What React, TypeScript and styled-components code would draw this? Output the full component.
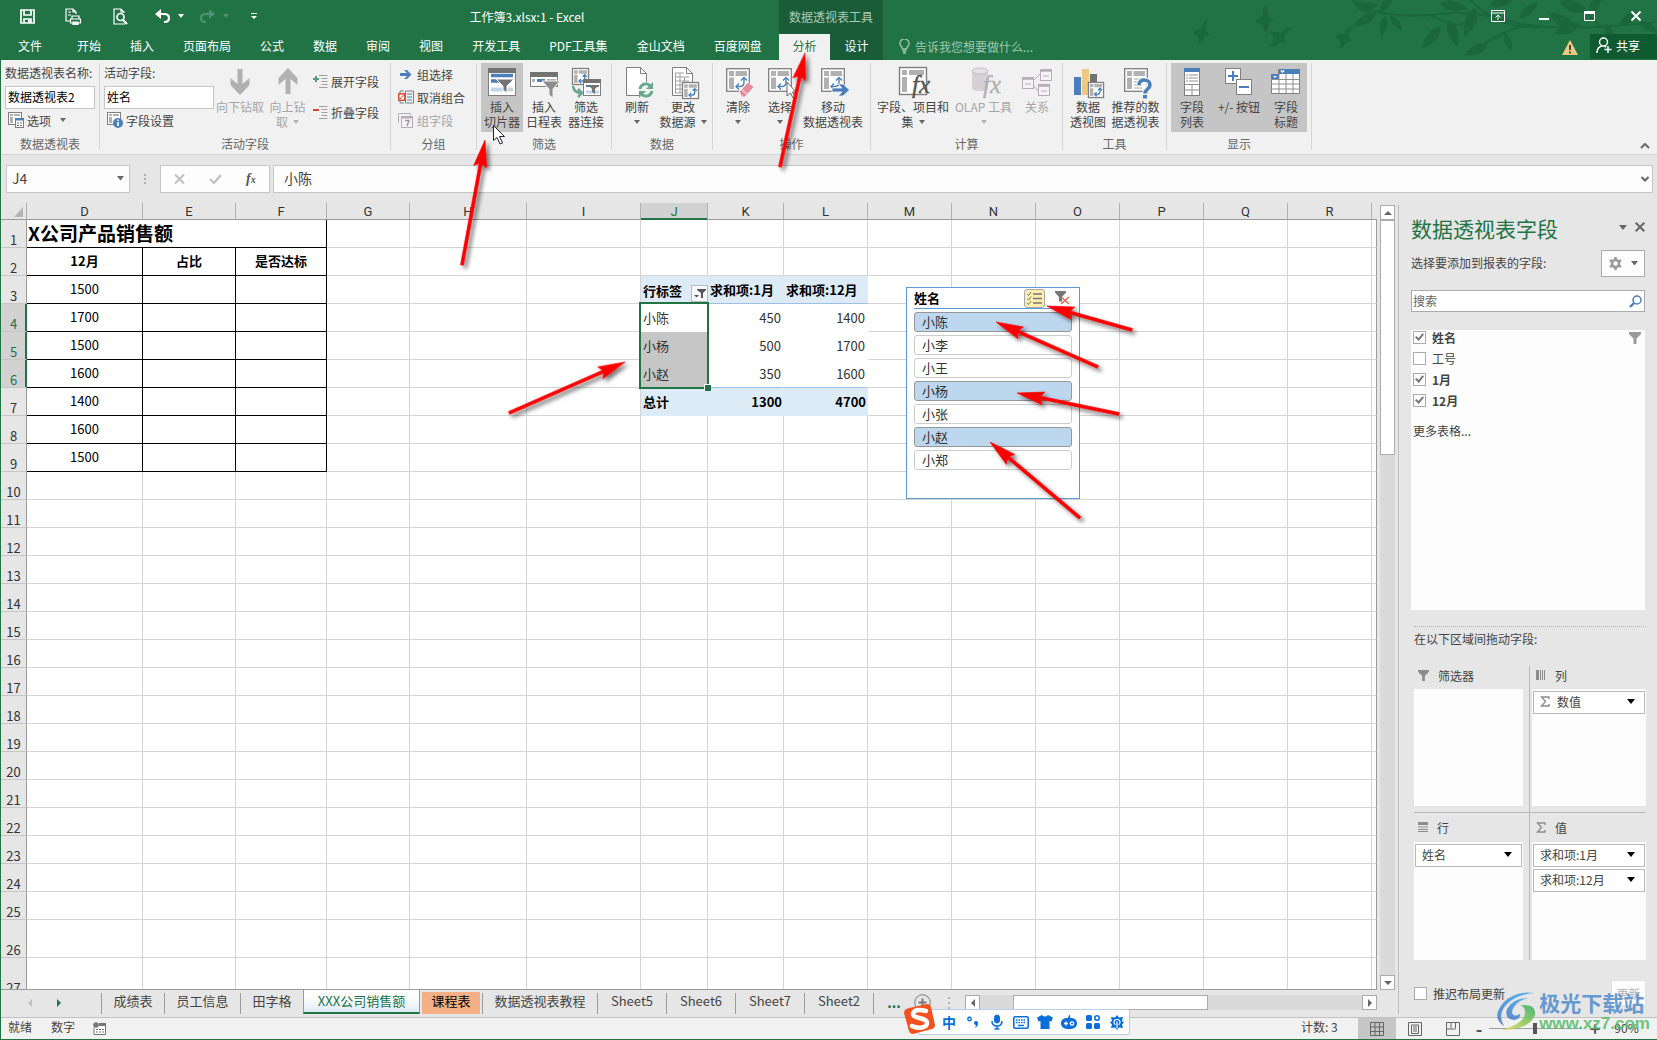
import React from 'react';
import styled, { createGlobalStyle, css } from 'styled-components';

const GREEN = '#217346';
const BLUE = '#4a7fbb';
const GREY = '#7f7f7f';

const Global = createGlobalStyle`
  *, *::before, *::after { box-sizing: border-box; }
  html, body { margin: 0; height: 100%; }
  body, button, input, table {
    font-family: "Noto Sans CJK SC", "Open Sans", sans-serif;
    font-size: 12px;
    line-height: 15px;
    color: #444;
  }
  button, input { margin: 0; padding: 0; border: 0; border-radius: 0; background: none; outline: none; }
  button { cursor: default; white-space: nowrap; }
  svg { display: block; flex: none; }
`;

const App_ = styled.div`
  position: relative;
  display: flex;
  flex-direction: column;
  height: 100vh;
  min-height: 700px;
  overflow: hidden;
  background: #e6e6e6;
  border-left: 1px solid ${GREEN};
`;

/* ---------- header ---------- */
const Header = styled.header`
  position: relative;
  flex: none;
  display: grid;
  grid-template-columns: 778px 104px 1fr auto;
  grid-template-rows: 34px 26px;
  background: ${GREEN};
  color: #fff;
`;
const Foliage = styled.svg`
  position: absolute;
  right: 0;
  top: 0;
`;
const TitleRow = styled.div`
  display: flex;
  align-items: center;
  padding-bottom: 2px;
`;
const QuickAccess = styled.div`
  width: 274px;
  height: 32px;
  padding-left: 18px;
  display: flex;
  align-items: center;
`;
const QuickButton = styled.button<{ $w: number; $gap?: number }>`
  width: ${p => p.$w}px;
  margin-right: ${p => p.$gap || 0}px;
  display: flex;
  justify-content: center;
  color: #fff;
`;
const FileTitle = styled.div`
  flex: 1;
  text-align: center;
`;
const ContextTitle = styled.div`
  background: #1b5c38;
  color: #a8cbb6;
  text-align: center;
  line-height: 34px;
`;
const WindowControls = styled.div`
  grid-column: 4;
  grid-row: 1;
  position: relative;
  display: flex;
  align-items: center;
  justify-content: flex-end;
  gap: 31px;
  padding-right: 14px;
  height: 32px;
`;
const WinButton = styled.button`
  width: 15px;
  display: flex;
  justify-content: center;
`;
const TabList = styled.nav`
  grid-row: 2;
  display: flex;
  gap: 29px;
  padding-left: 17px;
`;
const Tab = styled.button<{ $first?: boolean }>`
  color: #fff;
  padding-bottom: 4px;
  margin-right: ${p => (p.$first ? 6 : 0)}px;
`;
const ContextTabs = styled.div`
  grid-row: 2;
  display: flex;
  background: #1b5c38;
`;
const ContextTab = styled.button<{ $active?: boolean }>`
  width: ${p => (p.$active ? 51 : 53)}px;
  padding-bottom: 4px;
  background: ${p => (p.$active ? '#f1f1f1' : 'transparent')};
  color: ${p => (p.$active ? GREEN : '#fff')};
`;
const TellMe = styled.button`
  grid-row: 2;
  display: flex;
  align-items: center;
  gap: 5px;
  padding: 0 0 2px 16px;
  color: #9fcab1;
`;
const ShareArea = styled.div`
  grid-row: 2;
  position: relative;
  display: flex;
  align-items: flex-start;
  justify-content: flex-end;
  gap: 12px;
`;
const WarningIcon = styled.svg`
  margin-top: 6px;
`;
const ShareButton = styled.button`
  display: flex;
  align-items: center;
  gap: 4px;
  width: 67px;
  height: 25px;
  padding: 0 0 2px 6px;
  background: #0f5a30;
  color: #fff;
`;

/* ---------- ribbon ---------- */
const Ribbon = styled.section`
  flex: none;
  display: flex;
  height: 95px;
  padding: 3px 0 4px;
  background: #f1f1f1;
  border-bottom: 1px solid #d2d2d2;
`;
const Group = styled.div<{ $w: number }>`
  flex: none;
  width: ${p => p.$w}px;
  display: flex;
  flex-direction: column;
  border-right: 1px solid #d5d5d5;
`;
const GroupBody = styled.div`
  flex: 1;
  display: flex;
  padding-left: 4px;
`;
const GroupLabel = styled.div`
  height: 14px;
  text-align: center;
  color: #666;
`;
const Big = styled.button<{ $w: number; $on?: boolean; $disabled?: boolean }>`
  flex: none;
  width: ${p => p.$w}px;
  height: 69px;
  padding-top: 4px;
  display: flex;
  flex-direction: column;
  align-items: center;
  background: ${p => (p.$on ? '#c5c5c5' : 'transparent')};
  color: ${p => (p.$disabled ? '#a6a6a6' : '#444')};
`;
const BigText = styled.span`
  display: flex;
  align-items: center;
  justify-content: center;
  gap: 5px;
  height: 15px;
`;
const Stack = styled.div<{ $w: number }>`
  width: ${p => p.$w}px;
  display: flex;
  flex-direction: column;
  align-items: flex-start;
  padding-top: 2px;
`;
const FieldLabel = styled.label`
  height: 21px;
  line-height: 15px;
  white-space: nowrap;
`;
const TextBox = styled.input`
  width: 100%;
  height: 23px;
  padding: 0 2px 2px;
  background: #fff;
  border: 1px solid #c6c6c6;
  color: #000;
`;
const SmallButton = styled.button<{ $disabled?: boolean; $h?: number; $indent?: boolean }>`
  height: ${p => p.$h || 23}px;
  display: flex;
  align-items: center;
  gap: 3px;
  padding-left: ${p => (p.$indent ? 3 : 0)}px;
  color: ${p => (p.$disabled ? '#a6a6a6' : '#444')};
`;
const MenuMark = styled.span`
  padding-left: 6px;
`;
const SmallStack = styled.div<{ $top: number; $left: number }>`
  display: flex;
  flex-direction: column;
  padding-top: ${p => p.$top}px;
  padding-left: ${p => p.$left}px;
`;
const CollapseRibbon = styled.button`
  margin-left: auto;
  align-self: flex-end;
  padding: 0 7px 1px;
`;

/* ---------- formula bar ---------- */
const FormulaRow = styled.div`
  flex: none;
  display: flex;
  align-items: center;
  height: 48px;
  padding: 0 4px 1px 5px;
`;
const Box = styled.div<{ $w?: number }>`
  ${p => (p.$w ? css`flex: none; width: ${p.$w}px;` : css`flex: 1;`)}
  height: 28px;
  display: flex;
  align-items: center;
  background: #fdfdfd;
  border: 1px solid #c6c6c6;
`;
const BoxInput = styled.input<{ $pad: number }>`
  flex: 1;
  min-width: 0;
  height: 100%;
  padding: 0 0 2px ${p => p.$pad}px;
  font-size: 14px;
  line-height: 20px;
`;
const DotsGap = styled.div`
  width: 30px;
  display: flex;
  justify-content: center;
`;
const SmallGap = styled.div`
  width: 3px;
`;
const Spacer = styled.div`
  flex: 1;
`;
const BoxButton = styled.button<{ $w: number }>`
  width: ${p => p.$w}px;
  height: 100%;
  display: flex;
  align-items: center;
  justify-content: center;
`;

/* ---------- sheet ---------- */
const Main = styled.div`
  flex: 1;
  min-height: 0;
  display: flex;
`;
const Workbook = styled.div`
  flex: 1;
  min-width: 0;
  display: flex;
  flex-direction: column;
`;
const SheetRow = styled.div`
  flex: 1;
  min-height: 0;
  display: flex;
  gap: 3px;
  padding-right: 3px;
`;
const SheetView = styled.div`
  position: relative;
  flex: 1;
  min-width: 0;
  overflow: hidden;
  border-bottom: 1px solid #9b9b9b;
`;
const Grid = styled.table`
  width: 100%;
  table-layout: fixed;
  border-collapse: separate;
  border-spacing: 0;
  background: #fff;
  font-size: 13px;
  color: #000;
`;
const ColHead = styled.th<{ $on?: boolean; $last?: boolean }>`
  height: 17px;
  padding: 1px 0 0;
  font-family: Roboto, sans-serif;
  font-size: 13px;
  font-weight: 400;
  line-height: 15px;
  background: ${p => (p.$on ? '#d2d2d2' : '#e6e6e6')};
  color: ${p => (p.$on ? GREEN : '#333')};
  border-right: ${p => (p.$last ? 0 : 1)}px solid #b1b1b1;
  border-bottom: 1px solid #9b9b9b;
  ${p => p.$on && css`box-shadow: inset 0 -1px ${GREEN}; border-bottom-color: ${GREEN};`}
`;
const CornerHead = styled(ColHead)`
  svg { margin-left: 13px; }
`;
const RowHead = styled.th<{ $on?: boolean }>`
  padding: 0;
  font-size: 13px;
  font-weight: 400;
  line-height: 15px;
  vertical-align: bottom;
  text-align: center;
  background: ${p => (p.$on ? '#d2d2d2' : '#e6e6e6')};
  color: ${p => (p.$on ? GREEN : '#333')};
  border-right: 1px solid ${p => (p.$on ? GREEN : '#9b9b9b')};
  border-bottom: 1px solid #c6c6c6;
  ${p => p.$on && css`box-shadow: inset -1px 0 ${GREEN};`}
`;
type CellKind = 'plain' | 'table' | 'title' | 'phead' | 'pbody' | 'pend' | 'ptotal' | 'edge';
const Cell = styled.td<{ $kind: CellKind; $bold?: boolean; $align?: string; $shade?: boolean }>`
  padding: 0 2px;
  overflow: hidden;
  white-space: nowrap;
  line-height: 18px;
  vertical-align: middle;
  text-align: ${p => p.$align || 'left'};
  font-weight: ${p => (p.$bold ? 700 : 400)};
  border-right: 1px solid #d4d4d4;
  border-bottom: 1px solid #d4d4d4;
  ${p => (p.$kind === 'table' || p.$kind === 'title') && css`border-color: #000; padding-bottom: 1px;`}
  ${p => p.$kind === 'title' && css`font-size: 19px; line-height: 24px; padding: 0 0 2px 1px;`}
  ${p => p.$kind === 'phead' && css`background: #ddebf7; border-right: 0; border-color: #9bc2e6;`}
  ${p => p.$kind === 'ptotal' && css`background: #ddebf7; border-right: 0; border-color: #ddebf7;`}
  ${p => p.$kind === 'pbody' && css`border-color: #fff; color: #333;`}
  ${p => p.$kind === 'pend' && css`border-right-color: #fff; border-bottom-color: #9bc2e6; color: #333;`}
  ${p => p.$kind === 'edge' && css`border-right-color: #9b9b9b; padding: 0;`}
  ${p => p.$shade && css`background: #c6c6c6; border-bottom-color: #c6c6c6;`}
`;
const LabelWithFilter = styled.div`
  display: flex;
  justify-content: space-between;
  align-items: flex-end;
  height: 27px;
  padding-bottom: 1px;
  line-height: 22px;
  margin-right: -2px;
`;
const FilterButton = styled.button`
  width: 17px;
  height: 17px;
  display: grid;
  place-items: center;
  background: #f6f8fb;
  border: 1px solid #b5b9c2;
`;
const Selection = styled.div`
  position: absolute;
  left: 638px;
  top: 99px;
  width: 70px;
  height: 87px;
  border: 2px solid ${GREEN};
  &::after {
    content: '';
    position: absolute;
    right: -4px;
    bottom: -4px;
    width: 7px;
    height: 7px;
    background: ${GREEN};
    border: 1px solid #fff;
    border-width: 1px 0 0 1px;
  }
`;
const Slicer = styled.section`
  position: absolute;
  left: 905px;
  top: 84px;
  width: 174px;
  height: 212px;
  padding: 0 7px;
  background: #fff;
  border: 1px solid #5b9bd5;
`;
const SlicerHead = styled.div`
  display: flex;
  align-items: center;
  height: 21px;
  margin-bottom: 3px;
  border-bottom: 1px solid #5b9bd5;
  color: #000;
  font-size: 13px;
  font-weight: 700;
`;
const SlicerName = styled.span`
  padding-bottom: 2px;
`;
const MultiSelect = styled.button`
  margin: 0 10px 0 auto;
  width: 21px;
  height: 19px;
  display: grid;
  place-items: center;
  background: #fbeeb0;
  border: 1px solid #a8a8a8;
  border-radius: 3px;
`;
const SlicerList = styled.div`
  display: flex;
  flex-direction: column;
  gap: 3px;
`;
const SlicerItem = styled.button<{ $on?: boolean }>`
  height: 20px;
  padding-left: 7px;
  text-align: left;
  font-size: 13px;
  line-height: 18px;
  color: #333;
  border: 1px solid ${p => (p.$on ? '#979797' : '#ccc')};
  border-radius: 3px;
  background: ${p => (p.$on ? '#bdd7ee' : '#fff')};
`;

const VScroll = styled.div`
  flex: none;
  width: 15px;
  margin-top: 2px;
  display: flex;
  flex-direction: column;
  background: #dadada;
`;
const HScroll = styled.div`
  flex: 1;
  height: 15px;
  display: flex;
  background: #dadada;
`;
const ScrollButton = styled.button`
  flex: none;
  width: 15px;
  height: 15px;
  display: grid;
  place-items: center;
  background: #fdfdfd;
  border: 1px solid #ababab;
`;
const VThumb = styled.div`
  height: 235px;
  background: #fff;
  border: 1px solid #ababab;
`;
const HThumb = styled.div`
  width: 195px;
  margin-left: 33px;
  background: #fff;
  border: 1px solid #ababab;
`;
const SheetTabs = styled.div`
  flex: none;
  height: 27px;
  display: flex;
  padding-right: 21px;
`;
const SheetNav = styled.div`
  width: 100px;
  padding: 0 0 2px 25px;
  display: flex;
  align-items: center;
  gap: 21px;
`;
const SheetTab = styled.button<{ $w: number; $kind?: string; $first?: boolean }>`
  flex: none;
  width: ${p => p.$w}px;
  height: 21px;
  margin-top: 3px;
  font-size: 13px;
  line-height: 15px;
  padding-bottom: 6px;
  border-right: 1px solid #9b9b9b;
  ${p => p.$first && css`border-left: 1px solid #9b9b9b;`}
  ${p => p.$kind === 'active' && css`
    height: 25px;
    margin-top: -1px;
    padding: 1px 0 2px;
    color: ${GREEN};
    background: linear-gradient(#fff 30%, #dfebf6);
    border-left: 1px solid #9b9b9b;
    border-bottom: 2px solid ${GREEN};
  `}
  ${p => p.$kind === 'orange' && css`
    height: 22px;
    margin: 2px 2px 0;
    padding-bottom: 5px;
    color: #000;
    background: #f4b084;
    border: 0;
  `}
  ${p => p.$kind === 'before' && css`border-right: 0;`}
  ${p => p.$kind === 'after' && css`border-left: 1px solid #9b9b9b;`}
`;
const TabTail = styled.div`
  flex: 1;
  display: flex;
  align-items: center;
  padding-bottom: 2px;
`;
const MoreSheets = styled.button`
  width: 40px;
  font-size: 14px;
  font-weight: 700;
  color: ${GREEN};
`;
const AddSheet = styled.button`
  margin-right: 17px;
`;
const Dots = styled.div`
  width: 17px;
`;

/* ---------- field pane ---------- */
const Pane = styled.aside`
  flex: none;
  width: 259px;
  margin: 2px 0 3px;
  display: flex;
  flex-direction: column;
  border-left: 1px solid #c0c0c0;
`;
const PaneTop = styled.div`
  flex: 1;
  min-height: 0;
  display: flex;
  flex-direction: column;
  padding: 4px 12px 16px;
`;
const PaneTitle = styled.div`
  display: flex;
  align-items: center;
  gap: 8px;
  height: 40px;
  padding-bottom: 4px;
`;
const PaneHeading = styled.h2`
  flex: 1;
  margin: 0;
  padding-top: 2px;
  font-size: 21px;
  line-height: 30px;
  font-weight: 400;
  color: ${GREEN};
`;
const PaneTools = styled.div`
  display: flex;
  align-items: center;
  justify-content: space-between;
  height: 28px;
  margin-bottom: 13px;
`;
const PaneHint = styled.span`
  padding-bottom: 2px;
`;
const GearButton = styled.button`
  width: 44px;
  height: 27px;
  display: flex;
  align-items: center;
  justify-content: center;
  gap: 9px;
  background: #fdfdfd;
  border: 1px solid #ababab;
`;
const SearchBox = styled.div`
  display: flex;
  align-items: center;
  flex: none;
  height: 22px;
  margin-bottom: 18px;
  padding: 0 2px 0 1px;
  background: #fff;
  border: 1px solid #ababab;
`;
const SearchInput = styled.input`
  flex: 1;
  min-width: 0;
  padding-bottom: 2px;
  &::placeholder { color: #666; opacity: 1; }
`;
const FieldList = styled.div`
  flex: 1;
  min-height: 0;
  position: relative;
  padding: 0 2px;
  background: #fdfdfd;
`;
const CheckRow = styled.label<{ $bold?: boolean; $h: number }>`
  display: flex;
  align-items: center;
  gap: 6px;
  height: ${p => p.$h}px;
  font-weight: ${p => (p.$bold ? 700 : 400)};
`;
const Check = styled.input`
  appearance: none;
  flex: none;
  position: relative;
  width: 13px;
  height: 13px;
  background: #fff;
  border: 1px solid #ababab;
  &:checked::after {
    content: '';
    position: absolute;
    left: 3px;
    top: 0;
    width: 5px;
    height: 8px;
    border: solid #777;
    border-width: 0 2px 2px 0;
    transform: rotate(40deg);
  }
`;
const FieldFilter = styled.button`
  margin-left: auto;
  align-self: flex-start;
  padding: 2px 2px 0;
`;
const MoreTables = styled.a`
  display: block;
  margin-top: 9px;
  color: #444;
  text-decoration: none;
`;
const PaneBottom = styled.div`
  flex: none;
  padding: 0 11px 0 15px;
`;
const AreasCaption = styled.div`
  height: 40px;
  padding-top: 4px;
  border-top: 1px dotted #b5b5b5;
`;
const Areas = styled.div`
  display: grid;
  grid-template-columns: 1fr 1fr;
`;
const Area = styled.section<{ $left?: boolean; $top?: boolean }>`
  display: flex;
  flex-direction: column;
  padding: ${p => (p.$left ? '0 6px 0 0' : '0 0 0 2px')};
  ${p => p.$left && css`border-right: 1px solid #b9b9b9;`}
  ${p => p.$top && css`padding-bottom: 6px; border-bottom: 1px solid #b9b9b9;`}
`;
const AreaHead = styled.div<{ $h: number }>`
  height: ${p => p.$h}px;
  display: flex;
  align-items: center;
  gap: 9px;
  padding: 0 0 ${p => (p.$h > 25 ? 0 : 4)}px 4px;
`;
const AreaBody = styled.div<{ $h: number }>`
  height: ${p => p.$h}px;
  padding: 2px 1px;
  display: flex;
  flex-direction: column;
  gap: 2px;
  background: #fdfdfd;
`;
const AreaItem = styled.button`
  height: 23px;
  padding: 0 9px 2px 6px;
  display: flex;
  align-items: center;
  gap: 7px;
  background: #fff;
  border: 1px solid #b9b9b9;
  svg:last-child { margin-left: auto; }
`;
const PaneFooter = styled.div`
  display: flex;
  align-items: center;
  justify-content: space-between;
  height: 54px;
  padding-top: 12px;
`;
const UpdateButton = styled.button`
  width: 35px;
  height: 26px;
  background: #fdfdfd;
  border: 1px solid #e1e1e1;
  color: #b1b1b1;
`;

/* ---------- status bar ---------- */
const Status = styled.footer`
  flex: none;
  height: 23px;
  display: flex;
  align-items: center;
  padding-left: 7px;
  background: #f1f1f1;
  border-top: 1px solid #c0c0c0;
  border-bottom: 1px solid ${GREEN};
`;
const StatusText = styled.span<{ $w?: number }>`
  padding-bottom: 4px;
  width: ${p => (p.$w ? p.$w + 'px' : 'auto')};
`;
const StatusRight = styled.div`
  margin-left: auto;
  display: flex;
  align-items: center;
`;
const ViewButton = styled.button<{ $on?: boolean }>`
  width: 38px;
  height: 21px;
  display: grid;
  place-items: center;
  background: ${p => (p.$on ? '#c6c6c6' : 'transparent')};
`;
const ZoomButton = styled.button`
  width: 14px;
  font-size: 18px;
  font-weight: 700;
  color: #555;
`;
const ZoomSlider = styled.input`
  appearance: none;
  width: 93px;
  height: 11px;
  margin: 0 6px 0 3px;
  background: linear-gradient(#a0a0a0, #a0a0a0) center / 100% 1px no-repeat;
  &::-webkit-slider-thumb {
    appearance: none;
    width: 4px;
    height: 11px;
    background: #555;
  }
`;
const ZoomText = styled.button`
  width: 55px;
  padding: 0 6px 2px 0;
`;

/* ---------- floating layers ---------- */
const ImeBar = styled.div`
  position: absolute;
  left: 917px;
  bottom: 5px;
  width: 212px;
  height: 26px;
  padding: 0 2px 0 20px;
  display: flex;
  align-items: center;
  justify-content: space-between;
  background: #fff;
  border: 1px solid #b9cfe8;
  border-radius: 2px;
`;
const ImeLogo = styled.svg`
  position: absolute;
  left: -15px;
  bottom: -1px;
`;
const ImeButton = styled.button`
  width: 20px;
  display: flex;
  justify-content: center;
  font-size: 14px;
  line-height: 20px;
  font-weight: 700;
  color: #0a6fd8;
`;
const Overlay = styled.svg`
  position: absolute;
  left: -1px;
  top: 0;
  pointer-events: none;
`;
const Watermark = styled.div`
  position: absolute;
  right: 7px;
  bottom: 6px;
  display: flex;
  align-items: center;
  pointer-events: none;
  opacity: 0.85;
`;
const WatermarkName = styled.div`
  font-size: 21px;
  line-height: 24px;
  font-weight: 700;
  color: #4f8ccd;
`;
const WatermarkUrl = styled.div`
  font-family: "Liberation Sans", sans-serif;
  font-size: 17px;
  line-height: 20px;
  font-weight: 700;
  color: #55bd6c;
`;

/* ---------- icons ---------- */
const Caret = ({ c = '#666', s = 6 }: { c?: string; s?: number }) => (
  <svg width={s} height={s / 2 + 1} viewBox="0 0 8 4" preserveAspectRatio="none"><path d="M0 0h8L4 4z" fill={c} /></svg>
);
const Tri = ({ d, c = '#666' }: { d: string; c?: string }) => (
  <svg width="8" height="8" viewBox="0 0 8 8"><path d={d} fill={c} /></svg>
);
const Funnel = ({ c = '#9a9a9a', s = 12 }: { c?: string; s?: number }) => (
  <svg width={s} height={s} viewBox="0 0 12 12"><path d="M0 0h12v2L7.500 6.500V12h-3V6.500L0 2z" fill={c} /></svg>
);
const Pivot = ({ x = 4, y = 1, s = 24, lines = false }: { x?: number; y?: number; s?: number; lines?: boolean }) => (
  <g transform={`translate(${x} ${y}) scale(${s / 24})`}>
    <rect x="0.700" y="0.700" width="22.600" height="22.600" fill="#fff" stroke={GREY} strokeWidth={24 / s * 1.300} />
    <path d="M3 3h5v5H3zM9.500 3H21v5H9.500zM3 9.500h5V21H3z" fill="#b1b1b1" />
    {lines
      ? <path d="M10 11h10M10 14h10M10 17h8M10 20h8" stroke="#c5c5c5" strokeWidth="1.500" />
      : <g fill="none" stroke={BLUE} strokeWidth={24 / s * 1.400}>
        <path d="M18 10v4q0 4.500-4 4.500h-3" /><path d="M15 12.500l3-3 3 3M13 15.500l-3 3 3 3" />
      </g>}
  </g>
);
const Fx = ({ x, y, s, c }: { x: number; y: number; s: number; c: string }) => (
  <text x={x} y={y} fontFamily="Liberation Serif, serif" fontStyle="italic" fontSize={s} fill={c} stroke={c} strokeWidth=".4">fx</text>
);
const ICONS: Record<string, React.ReactNode> = {
  down: <path d="M13.500 2h5v15l7-6v7L16 28 6.500 18v-7l7 6z" fill="#b1b1b1" />,
  up: <path d="M13.500 27h5V12l7 6v-7L16 1 6.500 11v7l7-6z" fill="#b1b1b1" />,
  slicer: <>
    <rect x="2.500" y="1.500" width="27" height="27" fill="#fff" stroke={GREY} /><path d="M2 1h28v5H2z" fill="#737373" />
    <path d="M5 8.500h22M5 14h12" stroke={BLUE} strokeWidth="3.500" /><path d="M5 22.500h22" stroke="#c3d6ec" strokeWidth="4" />
    <path d="M10 12h18l-7 7v7l-4-3v-4z" fill="#737373" stroke="#fff" strokeWidth="1" />
  </>,
  timeline: <>
    <rect x="2.500" y="5.500" width="27" height="14" fill="#fff" stroke={GREY} /><path d="M2 5h28v5H2z" fill="#737373" />
    <path d="M4 13.500h3" stroke="#b1b1b1" strokeWidth="3" /><path d="M9 13.500h8" stroke={BLUE} strokeWidth="3" /><path d="M19 13.500h9" stroke="#b1b1b1" strokeWidth="3" />
    <path d="M14 14h18l-7 8v9l-4-3v-6z" fill="#8c8c8c" stroke="#f1f1f1" />
  </>,
  connect: <>
    <Pivot x={2} y={1} s={17} />
    <path d="M3 19q1 7 8 7M8 22l4 4-4 4" stroke="#6aa78f" strokeWidth="2.500" fill="none" />
    <rect x="13.500" y="12.500" width="17" height="16" fill="#fff" stroke={GREY} /><path d="M13 12h18v4H13z" fill="#737373" />
    <path d="M16 19h13" stroke={BLUE} strokeWidth="2" /><path d="M16 25h13" stroke="#c3d6ec" strokeWidth="3" /><path d="M18 18h11l-4 4v5l-3-2v-3z" fill="#737373" />
  </>,
  refresh: <>
    <path d="M5.500 0.500h14l6 6v22h-20z" fill="#fff" stroke={GREY} /><path d="M19.500 .500v6h6" fill="none" stroke={GREY} />
    <circle cx="25" cy="23" r="8" fill="#f1f1f1" />
    <g fill="none" stroke="#6aa78f" strokeWidth="2.800"><path d="M19 22a6 6 0 0 1 10.500-3M31 24a6 6 0 0 1-10.500 3" /></g>
    <path d="M32 15v7h-7zM18 31v-7h7z" fill="#6aa78f" />
  </>,
  source: <>
    <path d="M5.500 .500h14l6 6v22h-20z" fill="#fff" stroke={GREY} /><path d="M19.500 .500v6h6" fill="none" stroke={GREY} />
    <path d="M8 6h9M8 10h14M8 14h14M8 18h14M8 22h14M8 26h9M8.500 6v20M13 6v20M17.500 10v16" stroke="#a0a0a0" fill="none" />
    <Pivot x={15} y={15} s={17} />
  </>,
  clear: <><Pivot /><path d="M17 25l9-10 6 5-9 10h-3z" fill="#e78ba0" stroke="#f1f1f1" /><path d="M19.500 22.500l6 5" stroke="#fff" /></>,
  select: <><Pivot /><path d="M23 15v14l3.500-3 2.500 5 2-1-2.500-5h3.500z" fill="#fff" stroke="#666" /></>,
  move: <><Pivot /><path d="M15 21h10l-4-4h5l6.500 6-6.500 6h-5l4-4H15z" fill={BLUE} stroke="#f1f1f1" strokeWidth=".8" /></>,
  fields: <>
    <rect x="2.500" y=".500" width="27" height="27" fill="#fff" stroke={GREY} strokeWidth="1.400" />
    <path d="M5 3h5v5H5zM12 3h15v5H12zM5 10h5v15H5z" fill="#b1b1b1" /><Fx x={15} y={26} s={25} c="#555" />
  </>,
  olap: <>
    <path d="M4 4v17q0 3 8 3t8-3V4z" fill="#d4d0d4" /><ellipse cx="12" cy="4" rx="8" ry="3" fill="#e4e0e4" stroke="#c5c0c5" /><Fx x={15} y={26} s={25} c="#b1b1b1" />
  </>,
  relation: <g fill="#f7f2f7" stroke="#b5aeb5">
    <path d="M12 14l8-8M12 18l6 7" /><rect x="1.500" y="10.500" width="11" height="11" /><rect x="19.500" y="2.500" width="11" height="11" /><rect x="17.500" y="17.500" width="11" height="11" />
    <path d="M1 11.500h12M19 3.500h12M17 18.500h12" strokeWidth="2.500" /><path d="M4 17h6M22 9h6M20 24h6" />
  </g>,
  chart: <><path d="M2 10h7v18H2z" fill={BLUE} /><path d="M10 2h7v26h-7z" fill="#efc983" /><path d="M18 7h7v8h-7z" fill="#737373" /><Pivot x={16} y={15} s={16} /></>,
  recommend: <><Pivot lines /><path d="M19 18c0-7 11-6 11 0 0 4-5 4-5 8.500" fill="none" stroke="#f1f1f1" strokeWidth="6" /><path d="M19 18c0-7 11-6 11 0 0 4-5 4-5 8.500" fill="none" stroke={BLUE} strokeWidth="3.500" /><path d="M23 28h4v3.500h-4z" fill={BLUE} /></>,
  fieldlist: <>
    <rect x="8.500" y="1.500" width="15" height="27" fill="#fff" stroke={GREY} /><path d="M8 1h16v4H8z" fill={BLUE} />
    <path d="M10 8h2M13 8h9M10 11h2M13 11h9M10 14h2M13 14h9M8 17.500h16M8 23h16M16 17v11" stroke="#8f8f8f" fill="none" />
  </>,
  plusminus: <>
    <rect x="2.500" y="1.500" width="15" height="15" fill="#fff" stroke={GREY} /><path d="M5 9h10M10 4v10" stroke={BLUE} strokeWidth="2" />
    <rect x="13.500" y="12.500" width="15" height="15" fill="#fff" stroke={GREY} /><path d="M16 20h10" stroke={BLUE} strokeWidth="2" />
  </>,
  headers: <>
    <path d="M1.500 8h7V2.500h21v24h-28z" fill="#fff" stroke={GREY} /><path d="M9 2h21v5H9zM1 7h8v5.500H1z" fill={BLUE} />
    <path d="M1 12.500h29M1 17h29M1 22h29M9 7v19M16 7v19M23 7v19" stroke="#8f8f8f" /><path d="M10 3.500h5l-2.500 2.500zM3 9h4L5 11z" fill="#fff" />
  </>,
};
const BigIcon = ({ n }: { n: string }) => <svg width="32" height="32" viewBox="0 0 32 32" overflow="visible">{ICONS[n]}</svg>;

const OptionIcon = ({ info }: { info?: boolean }) => (
  <svg width="16" height="16" viewBox="0 0 16 16">
    <rect x=".5" y=".5" width="13" height="12" fill="#fff" stroke={GREY} /><path d="M2 2h3v2H2zM6 2h6v2H6zM2 5h3v6H2z" fill="#b1b1b1" />
    {info
      ? <><circle cx="11" cy="11" r="5" fill={BLUE} /><path d="M11 7.500v1.500M11 10v4" stroke="#fff" strokeWidth="1.600" /></>
      : <><rect x="7.500" y="6.500" width="8" height="9" fill="#fff" stroke={GREY} /><path d="M7 6h9v2.500H7z" fill={BLUE} /><path d="M9 11h2M12 11h2M9 13.500h2M12 13.500h2" stroke="#777" /></>}
  </svg>
);
const ExpandIcon = ({ minus }: { minus?: boolean }) => (
  <svg width="15" height="14" viewBox="0 0 15 14">
    <path d={minus ? 'M0 4h6' : 'M0 4h6M3 1v6'} stroke={minus ? '#d24726' : '#559c81'} strokeWidth="2" />
    <path d="M6 .500h8.500M8.500 3.500h6M8.500 6.500h6M8.500 9.500h6M6 12.500h8.500" stroke="#a0a0a0" />
  </svg>
);
const GroupIcon = ({ k }: { k: number }) => (
  <svg width="16" height="15" viewBox="0 0 16 15">
    {k === 0 && <path d="M2 6h7L6 3h3l4.500 4.500L9 12H6l3-3H2z" fill={BLUE} />}
    {k === 1 && <><path d="M6 1H2v2M6 13H2v-2M7.500 1h8v12h-8z" fill="none" stroke={GREY} /><rect x=".8" y="3.800" width="6" height="6.500" fill="#fff" stroke="#d24726" strokeWidth="1.400" /><path d="M2 9l3.500-4" stroke="#d24726" /><path d="M9 4h5M9 7h5M9 10h5" stroke={BLUE} /></>}
    {k === 2 && <><path d="M.500 10V.500h12v2" fill="none" stroke="#b5aeb5" /><rect x="3.500" y="3.500" width="11" height="11" fill="#f7f2f7" stroke="#b5aeb5" /><path d="M3 4.500h12" stroke="#b5aeb5" strokeWidth="2" /><path d="M7 7.500h4L9 13" fill="none" stroke="#999" strokeWidth="1.400" /></>}
  </svg>
);
const Sigma = () => <svg width="10" height="11" viewBox="0 0 10 11"><path d="M9 3V1H1.500l4 4.500-4 4.500H9V8" fill="none" stroke="#8c8c8c" strokeWidth="1.400" /></svg>;
const ColsIcon = () => <svg width="10" height="11" viewBox="0 0 10 11"><path d="M0 0h3v10H0z" fill="#8c8c8c" /><path d="M4.500 0v10M6.500 0v10M8.500 0v10" stroke="#8c8c8c" /></svg>;
const RowsIcon = () => <svg width="10" height="11" viewBox="0 0 10 11"><path d="M0 0h10v3H0z" fill="#8c8c8c" /><path d="M0 5h10M0 7.500h10M0 9.500h10" stroke="#8c8c8c" /></svg>;

type BigProps = { w: number; icon: string; l1: string; l2?: string; menu?: boolean; on?: boolean; off?: boolean };
const BigBtn = ({ w, icon, l1, l2, menu, on, off }: BigProps) => (
  <Big $w={w} $on={on} $disabled={off}>
    <BigIcon n={icon} />
    <BigText>{l1}</BigText>
    <BigText>{l2}{menu && <Caret c={off ? '#b5b5b5' : '#666'} />}</BigText>
  </Big>
);

const Leaf = ({ x, y, r, s = 1 }: { x: number; y: number; r: number; s?: number }) => (
  <path transform={`translate(${x} ${y}) rotate(${r}) scale(${s})`} d="M0 0Q8-9 24 0Q8 8 0 0" />
);
const Bird = ({ x, y, r, s = 1 }: { x: number; y: number; r: number; s?: number }) => (
  <path transform={`translate(${x} ${y}) rotate(${r}) scale(${s})`} d="M-8 4Q-4-1 0-1Q0-9 6-11Q4-4 5 1L9 4L4 6Q4 12-1 14Q-1 9-3 6Z" />
);
const HeaderArt = () => (
  <Foliage width="480" height="60" viewBox="1177 0 480 60" fill="#1c663d">
    <Bird x={1201} y={30} r={5} />
    <Bird x={1263} y={17} r={-10} s={1.100} />
    <Bird x={1280} y={34} r={35} s={1.100} />
    <Bird x={1344} y={35} r={15} />
    <g fill="none" stroke="#1c663d" strokeWidth="2">
      <path d="M1360 6Q1390 20 1440 14Q1480 10 1520 24Q1570 32 1657 22" />
      <path d="M1470 0Q1500 30 1540 27M1520 26Q1500 34 1480 46M1600 27Q1590 12 1570 4M1430 15Q1460 30 1465 22" />
    </g>
    <Leaf x={1372} y={12} r={-150} /><Leaf x={1376} y={13} r={150} s={1.100} /><Leaf x={1380} y={12} r={-50} s={0.900} />
    <Leaf x={1385} y={16} r={100} s={0.900} /><Leaf x={1390} y={16} r={50} s={0.800} /><Leaf x={1360} y={8} r={-10} s={0.800} />
    <Leaf x={1440} y={27} r={130} s={1.200} /><Leaf x={1448} y={20} r={70} s={1.200} /><Leaf x={1475} y={8} r={110} s={1.300} />
    <Leaf x={1440} y={4} r={10} s={1.200} /><Leaf x={1490} y={6} r={-20} s={1.200} /><Leaf x={1488} y={44} r={155} s={1.100} />
    <Leaf x={1505} y={34} r={70} s={0.800} /><Leaf x={1520} y={18} r={-40} /><Leaf x={1575} y={28} r={-150} s={1.300} />
    <Leaf x={1590} y={14} r={-60} /><Leaf x={1605} y={25} r={60} s={0.800} /><Leaf x={1620} y={24} r={-30} /><Leaf x={1580} y={24} r={160} s={1.200} />
    <Leaf x={1640} y={22} r={30} s={0.900} /><Leaf x={1560} y={2} r={20} s={1.300} />
  </Foliage>
);

/* tip and tail of each annotation arrow */
const ARROWS = [
  [485, 140, 462, 265], [805, 53, 780, 167], [625, 362, 509, 413], [1047, 306, 1132, 330],
  [996, 322, 1098, 367], [1017, 393, 1119, 414], [990, 442, 1080, 518],
];
const Arrow = ({ p }: { p: number[] }) => {
  const [x, y, tx, ty] = p;
  const len = Math.hypot(tx - x, ty - y);
  const a = (Math.atan2(ty - y, tx - x) * 180) / Math.PI;
  return (
    <g transform={`translate(${x} ${y}) rotate(${a})`}>
      <path d={`M0 0L27-6.500L24-1.500H${len}V1.500H24L27 6.500Z`} fill="#fb0506" stroke="#fb0506" strokeWidth=".6" strokeLinejoin="round" />
    </g>
  );
};

/* ---------- sheet data ---------- */
const COLS: [string, number][] = [
  ['D', 116], ['E', 93], ['F', 91], ['G', 83], ['H', 117], ['I', 114], ['J', 67], ['K', 76], ['L', 84],
  ['M', 84], ['N', 84], ['O', 84], ['P', 84], ['Q', 84], ['R', 84],
];
const D_VALUES = ['', '', '12月', '1500', '1700', '1500', '1600', '1400', '1600', '1500'];
const PIVOT: Record<number, string[]> = {
  3: ['行标签', '求和项:1月', '求和项:12月'],
  4: ['小陈', '450', '1400'], 5: ['小杨', '500', '1700'], 6: ['小赵', '350', '1600'], 7: ['总计', '1300', '4700'],
};

const renderCell = (row: number, col: string) => {
  if (row === 1) {
    if (col === 'D') return <Cell key={col} $kind="title" $bold colSpan={3}>X公司产品销售额</Cell>;
    if (col === 'E' || col === 'F') return null;
  }
  if (row <= 9 && 'DEF'.includes(col)) {
    const text = col === 'D' ? D_VALUES[row] : row === 2 ? (col === 'E' ? '占比' : '是否达标') : '';
    return <Cell key={col} $kind="table" $align="center" $bold={row === 2}>{text}</Cell>;
  }
  if (PIVOT[row] && 'JKL'.includes(col)) {
    const i = 'JKL'.indexOf(col);
    const text = PIVOT[row][i];
    if (row === 3) {
      return (
        <Cell key={col} $kind="phead" $bold>
          {i === 0 ? <LabelWithFilter>{text}<FilterButton aria-label="筛选"><svg width="12" height="11" viewBox="0 0 12 11"><path d="M3 1h9v1L9 5v5H7V5L3 2z" fill="#555" /><path d="M0 7h5L2.500 9.500z" fill="#555" /></svg></FilterButton></LabelWithFilter> : text}
        </Cell>
      );
    }
    return (
      <Cell key={col} $kind={row === 7 ? 'ptotal' : row === 6 ? 'pend' : 'pbody'} $bold={row === 7}
        $align={i ? 'right' : 'left'} $shade={i === 0 && (row === 5 || row === 6)}>{text}</Cell>
    );
  }
  return <Cell key={col} $kind="plain" />;
};

const TABS = ['文件', '开始', '插入', '页面布局', '公式', '数据', '审阅', '视图', '开发工具', 'PDF工具集', '金山文档', '百度网盘'];

export default function App() {
  return (
    <App_>
      <Global />
      <Header>
        <HeaderArt />
        <TitleRow>
          <QuickAccess>
            <QuickButton $w={16} $gap={29} aria-label="保存"><svg width="15" height="15" viewBox="0 0 15 15"><path d="M1 1h13v13H1zM4 1v5h7V1M4 14v-4h7v4" fill="none" stroke="#fff" strokeWidth="1.700" /><path d="M8 11h2v3H8z" fill="#fff" /></svg></QuickButton>
            <QuickButton $w={18} $gap={29} aria-label="打印"><svg width="17" height="17" viewBox="0 0 17 17" fill="none" stroke="#fff" strokeWidth="1.200"><path d="M5 13H1V1h7l3 3v2M8 1v3h3M3 4h3M3 7h3" /><path d="M7 8h7v3H7zM5.500 11h10v4h-10z" /><path d="M8 14h5v2.500H8z" fill="#fff" /></svg></QuickButton>
            <QuickButton $w={18} $gap={25} aria-label="预览"><svg width="17" height="17" viewBox="0 0 17 17" fill="none" stroke="#fff" strokeWidth="1.200"><path d="M12 5V4L9 1H2v15h11M9 1v3h3" /><circle cx="8.500" cy="9" r="3.500" strokeWidth="1.700" /><path d="M11 12l4 4" strokeWidth="2.200" /></svg></QuickButton>
            <QuickButton $w={18} $gap={6} aria-label="撤消"><svg width="16" height="14" viewBox="0 0 16 14"><path d="M2 5h7q5 0 5 4t-5 4" fill="none" stroke="#fff" strokeWidth="2.200" /><path d="M0 5l6-5v10z" fill="#fff" /></svg></QuickButton>
            <QuickButton $w={6} $gap={15} aria-label="撤消列表"><Caret c="#fff" /></QuickButton>
            <QuickButton $w={16} $gap={8} aria-label="恢复"><svg width="16" height="14" viewBox="0 0 16 14"><path d="M14 5H7Q2 5 2 9t5 4" fill="none" stroke="#4f9170" strokeWidth="2.200" /><path d="M16 5l-6-5v10z" fill="#4f9170" /></svg></QuickButton>
            <QuickButton $w={6} $gap={21} aria-label="恢复列表"><Caret c="#4f9170" /></QuickButton>
            <QuickButton $w={8} aria-label="自定义"><svg width="6" height="7" viewBox="0 0 6 7"><path d="M0 .500h6" stroke="#fff" /><path d="M0 3h6L3 6z" fill="#fff" /></svg></QuickButton>
          </QuickAccess>
          <FileTitle>工作簿3.xlsx:1 - Excel</FileTitle>
        </TitleRow>
        <ContextTitle>数据透视表工具</ContextTitle>
        <WindowControls>
          <WinButton aria-label="功能区显示选项"><svg width="14" height="12" viewBox="0 0 14 12" fill="none" stroke="#fff"><path d="M.500.500h13v11H.500zM.500 3h13M7 10V5M4.500 7.500L7 5l2.500 2.500" /></svg></WinButton>
          <WinButton aria-label="最小化"><svg width="10" height="10"><path d="M0 7h10v2H0z" fill="#fff" /></svg></WinButton>
          <WinButton aria-label="最大化"><svg width="11" height="10" viewBox="0 0 11 10"><path d="M.500 1.500h10v8H.500z" fill="none" stroke="#fff" /><path d="M0 0h11v3H0z" fill="#fff" /></svg></WinButton>
          <WinButton aria-label="关闭"><svg width="10" height="10" viewBox="0 0 10 10"><path d="M.500.500l9 9M9.500.500l-9 9" stroke="#fff" strokeWidth="2" /></svg></WinButton>
        </WindowControls>
        <TabList>{TABS.map((t, i) => <Tab key={t} $first={i === 0}>{t}</Tab>)}</TabList>
        <ContextTabs><ContextTab $active>分析</ContextTab><ContextTab>设计</ContextTab></ContextTabs>
        <TellMe><svg width="11" height="15" viewBox="0 0 11 15" fill="none" stroke="#9fcab1" strokeWidth="1.300"><path d="M3.500 10Q3.500 8.500 2 7A4.400 4.400 0 1 1 9 7Q7.500 8.500 7.500 10zM3.500 12h4M4 14h3" /></svg>告诉我您想要做什么...</TellMe>
        <ShareArea>
          <WarningIcon width="16" height="15" viewBox="0 0 16 15"><path d="M8 0l8 15H0z" fill="#efc983" /><path d="M8 5v5M8 11.500v2" stroke="#444" strokeWidth="2" /></WarningIcon>
          <ShareButton><svg width="16" height="17" viewBox="0 0 16 17" fill="none" stroke="#fff" strokeWidth="1.500"><circle cx="7.500" cy="5" r="4" /><path d="M1 16q0-6 5-7M8 9l2 1M12 9v7M8.500 12.500h7" /></svg>共享</ShareButton>
        </ShareArea>
      </Header>

      <Ribbon>
        <Group $w={99}>
          <GroupBody>
            <Stack $w={90}>
              <FieldLabel htmlFor="pname">数据透视表名称:</FieldLabel>
              <TextBox id="pname" defaultValue="数据透视表2" />
              <SmallButton $h={22} $indent><OptionIcon />选项<MenuMark><Caret /></MenuMark></SmallButton>
            </Stack>
          </GroupBody>
          <GroupLabel>数据透视表</GroupLabel>
        </Group>
        <Group $w={291}>
          <GroupBody>
            <Stack $w={110}>
              <FieldLabel htmlFor="afield">活动字段:</FieldLabel>
              <TextBox id="afield" defaultValue="姓名" />
              <SmallButton $h={22} $indent><OptionIcon info />字段设置</SmallButton>
            </Stack>
            <BigBtn w={52} icon="down" l1="向下钻取" off />
            <BigBtn w={43} icon="up" l1="向上钻" l2="取" menu off />
            <SmallStack $top={3} $left={4}>
              <SmallButton $h={31}><ExpandIcon />展开字段</SmallButton>
              <SmallButton $h={31}><ExpandIcon minus />折叠字段</SmallButton>
            </SmallStack>
          </GroupBody>
          <GroupLabel>活动字段</GroupLabel>
        </Group>
        <Group $w={86}>
          <GroupBody>
            <SmallStack $top={0} $left={3}>
              <SmallButton><GroupIcon k={0} />组选择</SmallButton>
              <SmallButton><GroupIcon k={1} />取消组合</SmallButton>
              <SmallButton $disabled><GroupIcon k={2} />组字段</SmallButton>
            </SmallStack>
          </GroupBody>
          <GroupLabel>分组</GroupLabel>
        </Group>
        <Group $w={135}>
          <GroupBody>
            <BigBtn w={42} icon="slicer" l1="插入" l2="切片器" on />
            <BigBtn w={42} icon="timeline" l1="插入" l2="日程表" />
            <BigBtn w={42} icon="connect" l1="筛选" l2="器连接" />
          </GroupBody>
          <GroupLabel>筛选</GroupLabel>
        </Group>
        <Group $w={101}>
          <GroupBody>
            <BigBtn w={42} icon="refresh" l1="刷新" menu />
            <BigBtn w={50} icon="source" l1="更改" l2="数据源" menu />
          </GroupBody>
          <GroupLabel>数据</GroupLabel>
        </Group>
        <Group $w={158}>
          <GroupBody>
            <BigBtn w={42} icon="clear" l1="清除" menu />
            <BigBtn w={42} icon="select" l1="选择" menu />
            <BigBtn w={64} icon="move" l1="移动" l2="数据透视表" />
          </GroupBody>
          <GroupLabel>操作</GroupLabel>
        </Group>
        <Group $w={192}>
          <GroupBody>
            <BigBtn w={76} icon="fields" l1="字段、项目和" l2="集" menu />
            <BigBtn w={65} icon="olap" l1="OLAP 工具" menu off />
            <BigBtn w={42} icon="relation" l1="关系" off />
          </GroupBody>
          <GroupLabel>计算</GroupLabel>
        </Group>
        <Group $w={104}>
          <GroupBody>
            <BigBtn w={42} icon="chart" l1="数据" l2="透视图" />
            <BigBtn w={53} icon="recommend" l1="推荐的数" l2="据透视表" />
          </GroupBody>
          <GroupLabel>工具</GroupLabel>
        </Group>
        <Group $w={145}>
          <GroupBody>
            <BigBtn w={42} icon="fieldlist" l1="字段" l2="列表" on />
            <BigBtn w={52} icon="plusminus" l1="+/- 按钮" on />
            <BigBtn w={42} icon="headers" l1="字段" l2="标题" on />
          </GroupBody>
          <GroupLabel>显示</GroupLabel>
        </Group>
        <CollapseRibbon aria-label="折叠功能区"><svg width="10" height="6" viewBox="0 0 10 6"><path d="M1 5l4-4 4 4" fill="none" stroke="#666" strokeWidth="2" /></svg></CollapseRibbon>
      </Ribbon>

      <FormulaRow>
        <Box $w={124}>
          <BoxInput $pad={5} aria-label="名称框" defaultValue="J4" />
          <BoxButton $w={18} aria-label="名称列表"><Caret s={7} /></BoxButton>
        </Box>
        <DotsGap><svg width="2" height="10"><path d="M0 0h2v2H0zM0 4h2v2H0zM0 8h2v2H0z" fill="#b1b1b1" /></svg></DotsGap>
        <Box $w={110}>
          <BoxButton $w={36} aria-label="取消"><svg width="11" height="10" viewBox="0 0 11 10"><path d="M1 .500l9 9M10 .500l-9 9" stroke="#c0c0c0" strokeWidth="2" /></svg></BoxButton>
          <BoxButton $w={36} aria-label="输入"><svg width="13" height="10" viewBox="0 0 13 10"><path d="M1 5l4 4 7-8" fill="none" stroke="#c0c0c0" strokeWidth="2.200" /></svg></BoxButton>
          <BoxButton $w={36} aria-label="插入函数"><svg width="14" height="16" viewBox="0 0 14 16"><text x="2" y="12" fontFamily="Liberation Serif, serif" fontStyle="italic" fontWeight="700" fontSize="14" fill="#555">f<tspan fontSize="10">x</tspan></text></svg></BoxButton>
        </Box>
        <SmallGap />
        <Box>
          <BoxInput $pad={10} aria-label="编辑栏" defaultValue="小陈" />
          <BoxButton $w={14} aria-label="展开编辑栏"><svg width="8" height="6" viewBox="0 0 8 6"><path d="M.500 1L4 4.500 7.500 1" fill="none" stroke="#666" strokeWidth="2" /></svg></BoxButton>
        </Box>
      </FormulaRow>

      <Main>
        <Workbook>
          <SheetRow>
            <SheetView>
              <Grid>
                <colgroup>
                  <col width={26} />
                  {COLS.map(([n, w]) => <col key={n} width={w} />)}
                  <col />
                </colgroup>
                <thead>
                  <tr>
                    <CornerHead><svg width="9" height="10" viewBox="0 0 9 10"><path d="M9 0v10H0z" fill="#b5b5b5" /></svg></CornerHead>
                    {COLS.map(([n]) => <ColHead key={n} $on={n === 'J'}>{n}</ColHead>)}
                    <ColHead $last />
                  </tr>
                </thead>
                <tbody>
                  {Array.from({ length: 27 }, (_, i) => i + 1).map(r => (
                    <tr key={r} style={{ height: r < 26 ? 28 : 38 }}>
                      <RowHead $on={r >= 4 && r <= 6}>{r}</RowHead>
                      {COLS.map(([n]) => renderCell(r, n))}
                      <Cell $kind="edge" />
                    </tr>
                  ))}
                </tbody>
              </Grid>
              <Selection />
              <Slicer>
                <SlicerHead>
                  <SlicerName>姓名</SlicerName>
                  <MultiSelect aria-label="多选"><svg width="15" height="13" viewBox="0 0 15 13" fill="none" stroke="#777"><path d="M6 2h9M6 6.500h9M6 11h9" strokeWidth="1.300" /><path d="M0 2l1.500 1.500L4 0M0 6.500L1.500 8 4 4.500M0 11l1.500 1.500L4 9" /></svg></MultiSelect>
                  <button aria-label="清除筛选器"><svg width="17" height="14" viewBox="0 0 17 14"><path d="M0 0h11v1.500L7 6v5l-3-1V6L0 1.500z" fill="#777" /><path d="M6 6l8 7M14 6l-8 7" stroke="#e0694a" strokeWidth="1.500" /></svg></button>
                </SlicerHead>
                <SlicerList>
                  {['小陈', '小李', '小王', '小杨', '小张', '小赵', '小郑'].map(n => (
                    <SlicerItem key={n} $on={['小陈', '小杨', '小赵'].includes(n)}>{n}</SlicerItem>
                  ))}
                </SlicerList>
              </Slicer>
            </SheetView>
            <VScroll>
              <ScrollButton aria-label="向上"><Tri d="M0 6h8L4 2z" /></ScrollButton>
              <VThumb />
              <Spacer />
              <ScrollButton aria-label="向下"><Tri d="M0 2h8L4 6z" /></ScrollButton>
            </VScroll>
          </SheetRow>
          <SheetTabs>
            <SheetNav><Tri d="M6 0v8L2 4z" c="#c0c0c0" /><Tri d="M2 0v8l4-4z" c={GREEN} /></SheetNav>
            <SheetTab $w={64} $first>成绩表</SheetTab>
            <SheetTab $w={76}>员工信息</SheetTab>
            <SheetTab $w={62} $kind="before">田字格</SheetTab>
            <SheetTab $w={117} $kind="active">XXX公司销售额</SheetTab>
            <SheetTab $w={58} $kind="orange">课程表</SheetTab>
            <SheetTab $w={116} $kind="after">数据透视表教程</SheetTab>
            {['Sheet5', 'Sheet6', 'Sheet7', 'Sheet2'].map(n => <SheetTab key={n} $w={69}>{n}</SheetTab>)}
            <TabTail>
              <MoreSheets>...</MoreSheets>
              <AddSheet aria-label="新工作表"><svg width="17" height="17" viewBox="0 0 17 17" fill="none" stroke="#777"><circle cx="8.500" cy="8.500" r="7.800" /><path d="M4.500 8.500h8M8.500 4.500v8" strokeWidth="2" /></svg></AddSheet>
              <Dots><svg width="2" height="12"><path d="M0 0h2v2H0zM0 5h2v2H0zM0 10h2v2H0z" fill="#b1b1b1" /></svg></Dots>
              <HScroll>
                <ScrollButton aria-label="向左"><Tri d="M6 0v8L2 4z" /></ScrollButton>
                <HThumb />
                <Spacer />
                <ScrollButton aria-label="向右"><Tri d="M2 0v8l4-4z" /></ScrollButton>
              </HScroll>
            </TabTail>
          </SheetTabs>
        </Workbook>

        <Pane>
          <PaneTop>
            <PaneTitle>
              <PaneHeading>数据透视表字段</PaneHeading>
              <button aria-label="任务窗格选项"><Caret s={8} /></button>
              <button aria-label="关闭窗格"><svg width="10" height="10" viewBox="0 0 10 10"><path d="M.700.700l8.600 8.600M9.300.700L.700 9.300" stroke="#666" strokeWidth="2" /></svg></button>
            </PaneTitle>
            <PaneTools>
              <PaneHint>选择要添加到报表的字段:</PaneHint>
              <GearButton aria-label="工具">
                <svg width="13" height="13" viewBox="0 0 13 13"><circle cx="6.500" cy="6.500" r="3.500" fill="none" stroke="#9a9a9a" strokeWidth="2.600" /><path d="M6.500 0v2.500M6.500 10.500V13M1 3.200l2 1.200M10 8.600l2 1.200M1 9.800l2-1.200M10 4.400l2-1.200" stroke="#9a9a9a" strokeWidth="2.600" /></svg>
                <Caret s={7} />
              </GearButton>
            </PaneTools>
            <SearchBox>
              <SearchInput aria-label="搜索" placeholder="搜索" />
              <svg width="13" height="13" viewBox="0 0 13 13" fill="none" stroke={BLUE}><circle cx="8" cy="5" r="4" strokeWidth="1.500" /><path d="M5 8l-4 4" strokeWidth="2.400" /></svg>
            </SearchBox>
            <FieldList>
              <CheckRow $bold $h={15}><Check type="checkbox" defaultChecked />姓名<FieldFilter aria-label="筛选字段"><Funnel /></FieldFilter></CheckRow>
              <CheckRow $h={27}><Check type="checkbox" />工号</CheckRow>
              <CheckRow $bold $h={15}><Check type="checkbox" defaultChecked />1月</CheckRow>
              <CheckRow $bold $h={27}><Check type="checkbox" defaultChecked />12月</CheckRow>
              <MoreTables href="#">更多表格...</MoreTables>
            </FieldList>
          </PaneTop>
          <PaneBottom>
            <AreasCaption>在以下区域间拖动字段:</AreasCaption>
            <Areas>
              <Area $left $top><AreaHead $h={23}><Funnel s={11} c="#8c8c8c" />筛选器</AreaHead><AreaBody $h={117} /></Area>
              <Area $top><AreaHead $h={23}><ColsIcon />列</AreaHead><AreaBody $h={117}><AreaItem><Sigma />数值<Caret c="#000" s={8} /></AreaItem></AreaBody></Area>
              <Area $left><AreaHead $h={29}><RowsIcon />行</AreaHead><AreaBody $h={118}><AreaItem>姓名<Caret c="#000" s={8} /></AreaItem></AreaBody></Area>
              <Area><AreaHead $h={29}><Sigma />值</AreaHead><AreaBody $h={118}><AreaItem>求和项:1月<Caret c="#000" s={8} /></AreaItem><AreaItem>求和项:12月<Caret c="#000" s={8} /></AreaItem></AreaBody></Area>
            </Areas>
            <PaneFooter>
              <CheckRow $h={20}><Check type="checkbox" />推迟布局更新</CheckRow>
              <UpdateButton>更新</UpdateButton>
            </PaneFooter>
          </PaneBottom>
        </Pane>
      </Main>

      <Status>
        <StatusText $w={43}>就绪</StatusText>
        <StatusText $w={42}>数字</StatusText>
        <svg width="13" height="13" viewBox="0 0 13 13"><path d="M1 5.500v7h11.500v-11H6" fill="#fff" stroke="#777" /><path d="M6 1h7v3H6z" fill="#777" /><circle cx="3" cy="3" r="2.800" fill="#777" /><path d="M3 7.500h8M3 10h8" stroke="#777" strokeDasharray="2 1" /></svg>
        <StatusRight>
          <StatusText $w={57}>计数: 3</StatusText>
          <ViewButton $on aria-label="普通"><svg width="14" height="14" viewBox="0 0 14 14"><path d="M.500.500h13v13H.500zM.500 5h13M.500 9.500h13M5 .500v13M9.500.500v13" fill="none" stroke="#666" /></svg></ViewButton>
          <ViewButton aria-label="页面布局"><svg width="14" height="14" viewBox="0 0 14 14"><path d="M.500.500h13v13H.500zM3.500 3h7v8.500h-7zM5 5h4M5 7h4M5 9h4" fill="none" stroke="#666" /></svg></ViewButton>
          <ViewButton aria-label="分页预览"><svg width="14" height="14" viewBox="0 0 14 14"><path d="M.500.500h13v13H.500zM5 .500v6M9.500.500v6M.500 7h9" fill="none" stroke="#666" /></svg></ViewButton>
          <ZoomButton aria-label="缩小">-</ZoomButton>
          <ZoomSlider type="range" aria-label="缩放" min={10} max={190} defaultValue={98} />
          <ZoomButton aria-label="放大">+</ZoomButton>
          <ZoomText>90%</ZoomText>
        </StatusRight>
      </Status>

      <ImeBar>
        <ImeLogo width="32" height="31" viewBox="0 0 32 31"><path d="M5 4L23 0q3 0 4 3l4 18q0 3-3 4L9 30q-3 0-4-3L0 9Q0 5 5 4z" fill="#f4511e" /><path d="M22 7q-12-3-13 3c0 5 14 3 14 9 0 5-9 6-15 3" fill="none" stroke="#fff" strokeWidth="4.500" strokeLinecap="round" /></ImeLogo>
        <ImeButton>中</ImeButton>
        <ImeButton aria-label="标点"><svg width="12" height="14" viewBox="0 0 12 14"><circle cx="2.500" cy="4" r="1.700" fill="none" stroke="#0a6fd8" strokeWidth="1.400" /><path d="M11 8a2 2 0 1 0-2 2q0 1-1.500 2.500Q11 12 11 8z" fill="#0a6fd8" /></svg></ImeButton>
        <ImeButton aria-label="语音"><svg width="12" height="16" viewBox="0 0 12 16" fill="none" stroke="#0a6fd8"><rect x="3.500" y="1" width="5" height="8" rx="2.500" fill="#0a6fd8" /><path d="M1 7q0 5 5 5t5-5M6 12v3M3.500 15h5" strokeWidth="1.500" /></svg></ImeButton>
        <ImeButton aria-label="键盘"><svg width="16" height="13" viewBox="0 0 16 13" fill="none" stroke="#0a6fd8"><rect x=".8" y=".8" width="14.400" height="11.400" rx="1.500" strokeWidth="1.600" /><path d="M3 4h10M3 6.500h10" strokeWidth="1.500" strokeDasharray="1.500 1" /><path d="M5 9.500h6" strokeWidth="1.500" /></svg></ImeButton>
        <ImeButton aria-label="皮肤"><svg width="16" height="14" viewBox="0 0 16 14"><path d="M5 0q3 3 6 0l5 2.500-1.500 4L12.500 6v8h-9V6l-2 .500L0 2.500z" fill="#0a6fd8" /></svg></ImeButton>
        <ImeButton aria-label="助手"><svg width="16" height="14" viewBox="0 0 16 14"><path d="M8 0q2 0 1 3c5 0 7 2 7 5.500S13 14 8 14 0 12 0 8.500 2 3 7 3z" fill="#0a6fd8" /><path d="M3 8.500h4M5 6.500v4" stroke="#fff" strokeWidth="1.300" /><circle cx="11" cy="8.500" r="1.700" fill="none" stroke="#fff" strokeWidth="1.300" /></svg></ImeButton>
        <ImeButton aria-label="工具箱"><svg width="14" height="14" viewBox="0 0 14 14" fill="#0a6fd8"><rect width="6" height="6" rx="1.500" /><rect y="8" width="6" height="6" rx="1.500" /><rect x="8" y="8" width="6" height="6" rx="1.500" /><circle cx="11" cy="3" r="2.200" fill="none" stroke="#0a6fd8" strokeWidth="1.600" /></svg></ImeButton>
        <ImeButton aria-label="设置"><svg width="14" height="15" viewBox="0 0 14 15"><path d="M7 0l2 2.500 4-.5-1 4 2 1.500-2 2 1 3.500-4-.500L7 15l-2-2.500-4 .500 1-3.500-2-2L2 6 1 2l4 .500z" fill="#0a6fd8" /><path d="M7 4.500q-3 0-3 2.500 0 2 1.500 2.800M7 4.500q3 0 3 2.500 0 2-1.500 2.800M7 6.500v7" fill="none" stroke="#fff" strokeWidth="1.200" /></svg></ImeButton>
      </ImeBar>

      <Watermark>
        <svg width="44" height="44" viewBox="0 0 44 44">
          <defs><linearGradient id="wg" x1="1" y1="0" x2="0" y2="1"><stop offset="0" stopColor="#3fb0e8" /><stop offset="1" stopColor="#4a78c8" /></linearGradient>
            <linearGradient id="wy" x1="1" y1="0" x2="0" y2="1"><stop offset="0" stopColor="#2fae62" /><stop offset="1" stopColor="#e6e24a" /></linearGradient></defs>
          <path d="M40 3Q20 0 8 13Q-4 28 9 36Q2 24 12 14Q22 4 40 3z" fill="url(#wg)" />
          <path d="M33 8Q18 8 12 19Q9 29 19 30Q26 29 25 24Q18 28 17 22Q19 12 33 8z" fill="url(#wg)" />
          <path d="M26 15Q42 14 40 25Q34 40 5 40Q24 36 29 27Q32 19 26 15z" fill="url(#wy)" />
        </svg>
        <div><WatermarkName>极光下载站</WatermarkName><WatermarkUrl>www.xz7.com</WatermarkUrl></div>
      </Watermark>

      <Overlay width="1200" height="540" viewBox="0 0 1200 540">
        <defs><filter id="sh" x="-20%" y="-20%" width="140%" height="140%"><feDropShadow dx="3" dy="3" stdDeviation="2" floodColor="#000" floodOpacity=".55" /></filter></defs>
        <path d="M493.500 125.500v15l3.500-3 3 6.500 2.500-1-3-6.500h5z" fill="#fff" stroke="#223" />
        <g filter="url(#sh)">{ARROWS.map((p, i) => <Arrow key={i} p={p} />)}</g>
      </Overlay>
    </App_>
  );
}
